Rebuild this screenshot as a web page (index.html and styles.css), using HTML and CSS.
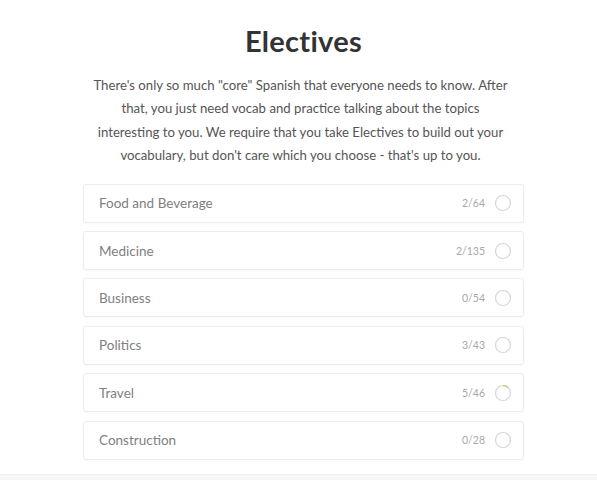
FILE: index.html
```html
<!DOCTYPE html>
<html>
<head>
<meta charset="utf-8">
<link rel="stylesheet" href="styles.css">
</head>
<body>
<main class="page">
  <h1 class="title">Electives</h1>
  <p class="intro">There's only so much "core" Spanish that everyone needs to know. After<br>that, you just need vocab and practice talking about the topics<br>interesting to you. We require that you take Electives to build out your<br>vocabulary, but don't care which you choose - that's up to you.</p>
  <ul class="list">
    <li class="card"><span class="name">Food and Beverage</span><span class="count">2/64</span><svg class="ring" viewBox="0 0 18 18"><circle cx="9" cy="9" r="7.5"/></svg></li>
    <li class="card"><span class="name">Medicine</span><span class="count">2/135</span><svg class="ring" viewBox="0 0 18 18"><circle cx="9" cy="9" r="7.5"/></svg></li>
    <li class="card"><span class="name">Business</span><span class="count">0/54</span><svg class="ring" viewBox="0 0 18 18"><circle cx="9" cy="9" r="7.5"/></svg></li>
    <li class="card"><span class="name">Politics</span><span class="count">3/43</span><svg class="ring" viewBox="0 0 18 18"><circle cx="9" cy="9" r="7.5"/></svg></li>
    <li class="card"><span class="name">Travel</span><span class="count">5/46</span><svg class="ring" viewBox="0 0 18 18"><circle cx="9" cy="9" r="7.5"/><path class="arc" d="M9 1.5 A7.5 7.5 0 0 1 14.3 3.7"/></svg></li>
    <li class="card"><span class="name">Construction</span><span class="count">0/28</span><svg class="ring" viewBox="0 0 18 18"><circle cx="9" cy="9" r="7.5"/></svg></li>
  </ul>
</main>
<footer class="footer"></footer>
</body>
</html>
```

FILE: styles.css
```css
html, body {
  margin: 0;
  padding: 0;
  background: #fff;
  font-family: Lato, "Open Sans", sans-serif;
}
body {
  height: 480px;
  overflow: hidden;
  display: flex;
  flex-direction: column;
}
.page {
  width: 441px;
  margin-left: 83px;
  flex: 1;
}
.title {
  margin: 24px 0 0;
  text-align: center;
  font-size: 29px;
  font-weight: 700;
  color: #333;
  line-height: 34px;
  letter-spacing: 0.3px;
}
.intro {
  margin: 16px -10px 0;
  padding: 0 6px 0 0;
  text-align: center;
  font-size: 13.2px;
  line-height: 23.4px;
  color: #555;
  white-space: nowrap;
}
.list {
  list-style: none;
  margin: 16px 0 0;
  padding: 0;
  display: flex;
  flex-direction: column;
  gap: 8.4px;
}
.card {
  height: 37px;
  border: 1px solid #ececec;
  border-radius: 3px;
  box-shadow: 0 1px 2px rgba(0,0,0,0.03);
  display: flex;
  align-items: center;
  padding: 0 11px 0 15px;
}
.name {
  flex: 1;
  font-size: 13.5px;
  color: #808080;
}
.count {
  font-size: 10.5px;
  color: #a8a8a8;
  margin-right: 9px;
}
.ring {
  width: 18px;
  height: 18px;
}
.ring circle {
  fill: none;
  stroke: #d6d6d6;
  stroke-width: 1.2;
}
.ring .arc {
  fill: none;
  stroke: #c9d27a;
  stroke-width: 1.4;
}
.footer {
  height: 5px;
  background: #f6f6f6;
  border-top: 1px solid #f0f0f0;
}
```
